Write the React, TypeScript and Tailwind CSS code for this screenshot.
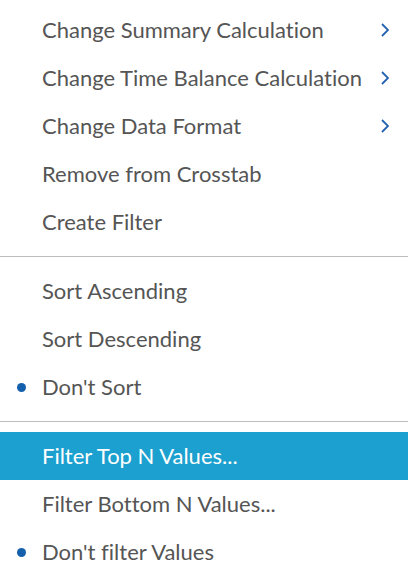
import { ReactNode } from "react";

type Item = { label: string; sub?: boolean; checked?: boolean; active?: boolean };

const groups: Item[][] = [
  [
    { label: "Change Summary Calculation", sub: true },
    { label: "Change Time Balance Calculation", sub: true },
    { label: "Change Data Format", sub: true },
    { label: "Remove from Crosstab" },
    { label: "Create Filter" },
  ],
  [
    { label: "Sort Ascending" },
    { label: "Sort Descending" },
    { label: "Don't Sort", checked: true },
  ],
  [
    { label: "Filter Top N Values...", active: true },
    { label: "Filter Bottom N Values..." },
    { label: "Don't filter Values", checked: true },
  ],
];

function Chevron() {
  return (
    <svg width="10" height="16" viewBox="0 0 10 16" className="text-[#2463b3]">
      <polyline points="2,2 8,8 2,14" fill="none" stroke="currentColor" strokeWidth="1.8" />
    </svg>
  );
}

function Row({ item }: { item: Item }): ReactNode {
  return (
    <div
      className={`flex items-center h-12 pl-[17px] pr-[18px] ${
        item.active ? "bg-[#1ba0d0] text-white" : "text-[#555555]"
      }`}
    >
      <span className="w-[25px] flex">
        {item.checked && <span className="w-[9px] h-[9px] rounded-full bg-[#1560ad]" />}
      </span>
      <span className="flex-1 whitespace-nowrap">{item.label}</span>
      {item.sub && <Chevron />}
    </div>
  );
}

export default function App() {
  return (
    <div
      className="w-[408px] h-[580px] bg-white overflow-hidden pt-[6px] text-[22px] leading-none [font-variant-ligatures:none]"
      style={{ fontFamily: "Lato, 'Open Sans', sans-serif" }}
    >
      {groups.map((g, i) => (
        <div key={i}>
          {i > 0 && <div className="my-[10px] h-px bg-[#bdbdbd]" />}
          {g.map((it) => (
            <Row key={it.label} item={it} />
          ))}
        </div>
      ))}
    </div>
  );
}
